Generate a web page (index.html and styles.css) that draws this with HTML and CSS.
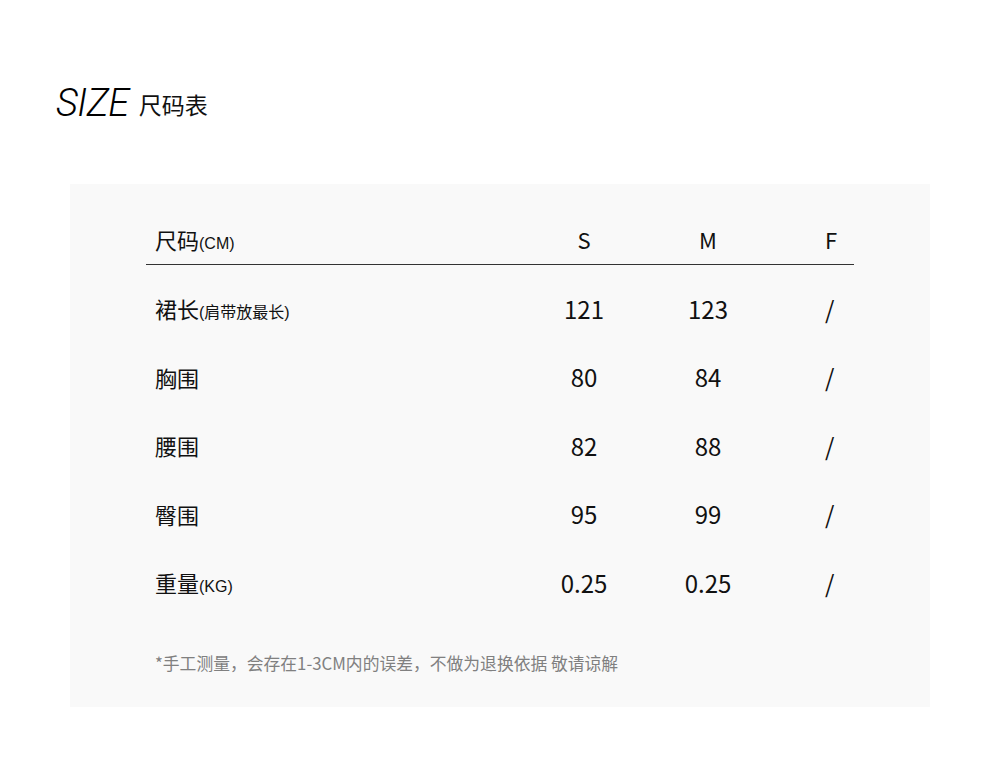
FILE: index.html
```html
<!DOCTYPE html>
<html lang="zh">
<head>
<meta charset="utf-8">
<link rel="stylesheet" href="styles.css">
</head>
<body>
<div class="page">
  <h1 class="title"><span class="title-en">SIZE</span><span class="title-cn">尺码表</span></h1>
  <section class="panel">
    <div class="table">
      <div class="row head">
        <div class="label">尺码<small>(CM)</small></div>
        <div class="cell">S</div>
        <div class="cell">M</div>
        <div class="cell last">F</div>
      </div>
      <div class="row">
        <div class="label">裙长<small>(肩带放最长)</small></div>
        <div class="cell">121</div>
        <div class="cell">123</div>
        <div class="cell last">/</div>
      </div>
      <div class="row">
        <div class="label">胸围</div>
        <div class="cell">80</div>
        <div class="cell">84</div>
        <div class="cell last">/</div>
      </div>
      <div class="row">
        <div class="label">腰围</div>
        <div class="cell">82</div>
        <div class="cell">88</div>
        <div class="cell last">/</div>
      </div>
      <div class="row">
        <div class="label">臀围</div>
        <div class="cell">95</div>
        <div class="cell">99</div>
        <div class="cell last">/</div>
      </div>
      <div class="row">
        <div class="label">重量<small>(KG)</small></div>
        <div class="cell">0.25</div>
        <div class="cell">0.25</div>
        <div class="cell last">/</div>
      </div>
    </div>
    <p class="note">*手工测量，会存在1-3CM内的误差，不做为退换依据 敬请谅解</p>
  </section>
</div>
</body>
</html>
```

FILE: styles.css
```css
html, body {
  margin: 0;
  padding: 0;
  background: #ffffff;
}
body {
  width: 1000px;
  height: 757px;
  overflow: hidden;
  font-family: "Noto Sans CJK SC", "Noto Sans", sans-serif;
  color: #111;
}
.page {
  padding-top: 80px;
}
.title {
  margin: 0 0 0 56px;
  height: 46px;
  display: flex;
  align-items: center;
  font-weight: normal;
}
.title-en {
  font-family: "Roboto", "Liberation Sans", sans-serif;
  font-weight: 300;
  font-style: italic;
  font-size: 38px;
  letter-spacing: -0.5px;
  color: #000;
}
.title-cn {
  font-family: "Noto Sans CJK SC", sans-serif;
  font-size: 23px;
  margin-left: 10px;
  margin-top: 2px;
  color: #111;
}
.panel {
  margin: 58px 0 0 70px;
  width: 860px;
  height: 523px;
  box-sizing: border-box;
  background: #f9f9f9;
  padding: 33px 0 0 76px;
}
.table {
  width: 708px;
}
.row {
  display: grid;
  grid-template-columns: 376px 124px 124px 84px;
  align-items: center;
  height: 68.5px;
}
.row > div {
  margin-top: -4px;
}
.row.head {
  height: 47px;
  border-bottom: 1px solid #333;
  margin-bottom: 11px;
}
.label {
  padding-left: 9px;
  font-size: 22px;
  white-space: nowrap;
}
.label small {
  font-family: "Liberation Sans", "Noto Sans CJK SC", sans-serif;
  font-size: 16px;
}
.cell {
  text-align: center;
  font-size: 24px;
  font-family: "Noto Sans CJK SC", "Noto Sans", sans-serif;
}
.head .cell {
  font-size: 22px;
}
.cell.last {
  text-align: left;
  padding-left: 55px;
}
.note {
  margin: 34px 0 0 9px;
  font-size: 16.8px;
  line-height: 20px;
  color: #808080;
}
```
